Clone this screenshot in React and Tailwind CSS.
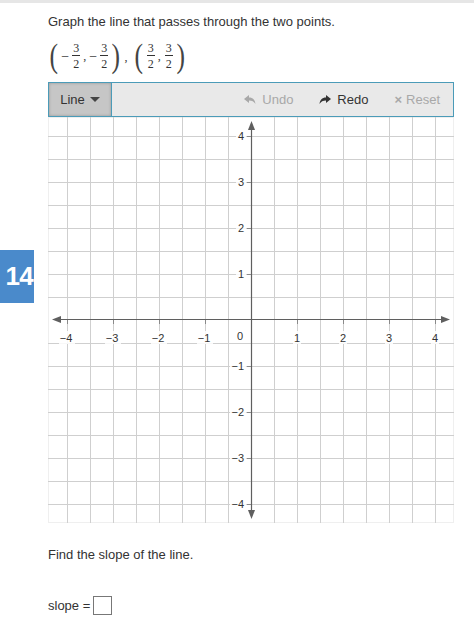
import { useMemo } from 'react'

function Frac({ n, d, neg }) {
  return (
    <span className="inline-flex items-center">
      {neg && <span className="mr-[3px] text-[14px]">−</span>}
      <span className="inline-flex flex-col items-center leading-none text-[12px]">
        <span className="px-[1px] pb-[1px] border-b border-[#333]">{n}</span>
        <span className="pt-[2px]">{d}</span>
      </span>
    </span>
  )
}

function Paren({ children }) {
  return (
    <span className="inline-flex items-center">
      <span className="text-[34px] leading-none font-light scale-x-75 text-[#444]">(</span>
      {children}
      <span className="text-[34px] leading-none font-light scale-x-75 text-[#444]">)</span>
    </span>
  )
}

function Graph() {
  const size = 406
  const c = 203
  const step = 23
  const lines = useMemo(() => {
    const out = []
    for (let k = -8; k <= 8; k++) {
      if (k === 0) continue
      out.push(c + k * step)
    }
    return out
  }, [])
  const units = [-4, -3, -2, -1, 1, 2, 3, 4]

  return (
    <svg width={size} height={size} className="block" style={{ fontFamily: 'Arial, "Liberation Sans", sans-serif' }}>
      <rect x="0.5" y="0.5" width={size - 1} height={size - 1} fill="#fff" stroke="#efefef" />
      {lines.map((p) => (
        <g key={p}>
          <line x1={p + 0.5} y1="0" x2={p + 0.5} y2={size} stroke="#cfcfcf" strokeWidth="1" />
          <line x1="0" y1={p + 0.5} x2={size} y2={p + 0.5} stroke="#cfcfcf" strokeWidth="1" />
        </g>
      ))}
      {/* axes */}
      <line x1="8" y1={c - 0.5} x2={size - 8} y2={c - 0.5} stroke="#5f5f5f" strokeWidth="1.2" />
      <line x1={c + 0.5} y1="8" x2={c + 0.5} y2={size - 8} stroke="#5f5f5f" strokeWidth="1.2" />
      <polygon points={`4,${c - 0.5} 13,${c - 4} 13,${c + 3}`} fill="#5f5f5f" />
      <polygon points={`${size - 4},${c - 0.5} ${size - 13},${c - 4} ${size - 13},${c + 3}`} fill="#5f5f5f" />
      <polygon points={`${c + 0.5},4 ${c - 3},13 ${c + 4},13`} fill="#5f5f5f" />
      <polygon points={`${c + 0.5},${size - 4} ${c - 3},${size - 13} ${c + 4},${size - 13}`} fill="#5f5f5f" />
      {units.map((u) => {
        const x = c + u * 46
        const y = c - u * 46
        return (
          <g key={u}>
            <line x1={x + 0.5} y1={c} x2={x + 0.5} y2={c + 4} stroke="#8a8a8a" />
            <line x1={c - 4} y1={y + 0.5} x2={c} y2={y + 0.5} stroke="#8a8a8a" />
            <rect x={x - (u < 0 ? 8 : 4)} y={c + 11} width={u < 0 ? 16 : 8} height={13} fill="#fff" opacity="0.85" />
            <text x={x + (u < 0 ? -1 : 0)} y={c + 22} fontSize="11" fill="#333" textAnchor="middle">
              {u < 0 ? `−${-u}` : u}
            </text>
            <rect x={c - (u < 0 ? 21 : 15)} y={y - 6} width={u < 0 ? 16 : 10} height={13} fill="#fff" opacity="0.85" />
            <text x={c - 7} y={y + 4} fontSize="11" fill="#333" textAnchor="end">
              {u < 0 ? `−${-u}` : u}
            </text>
          </g>
        )
      })}
      <text x={c - 11} y={c + 20} fontSize="11" fill="#333" textAnchor="middle">0</text>
    </svg>
  )
}

export default function App() {
  return (
    <div className="relative w-[474px] h-[620px] bg-white text-[#333] overflow-hidden" style={{ fontFamily: '"Liberation Sans", Arial, sans-serif' }}>
      <div className="h-[3px] bg-[#e6e6e6]" />

      {/* Question number */}
      <div className="absolute left-0 top-[250px] w-[34px] h-[53px] bg-[#4a8acb] flex items-center justify-end pr-[1px]">
        <span className="text-white text-[26px] font-bold tracking-tight">14</span>
      </div>

      <div className="pl-[48px] pr-[20px]">
        <p className="mt-[11px] text-[13px] leading-[16px]">Graph the line that passes through the two points.</p>

        <div className="mt-[9px] flex items-center h-[34px] text-[#333]" style={{ fontFamily: '"Liberation Serif", "DejaVu Serif", serif' }}>
          <Paren>
            <span className="inline-flex items-center px-[2px]">
              <Frac n="3" d="2" neg />
              <span className="text-[12px] mx-[3px] self-end mb-[5px]">,</span>
              <Frac n="3" d="2" neg />
            </span>
          </Paren>
          <span className="text-[12px] ml-[3px] mr-[6px] self-end mb-[7px]">,</span>
          <Paren>
            <span className="inline-flex items-center px-[2px]">
              <Frac n="3" d="2" />
              <span className="text-[12px] ml-[3px] mr-[4px] self-end mb-[5px]">,</span>
              <Frac n="3" d="2" />
            </span>
          </Paren>
        </div>

        {/* Toolbar */}
        <div className="mt-[9px] w-[406px] h-[35px] border border-[#4b9bb8] bg-[#e9e9e9] flex items-stretch">
          <button className="w-[63px] bg-[#c6c6c6] border-r border-[#4b9bb8] flex items-center justify-center gap-[5px] text-[13px] text-[#333] shadow-[inset_0_0_3px_rgba(0,0,0,0.25)]">
            Line
            <span className="w-0 h-0 border-l-[5px] border-r-[5px] border-t-[5px] border-l-transparent border-r-transparent border-t-[#444]" />
          </button>
          <div className="flex-1" />
          <div className="flex items-center text-[13px]">
            <span className="flex items-center gap-[6px] text-[#a8a8a8]">
              <svg width="12" height="10" viewBox="0 0 12 10"><path d="M0 4 L5 0 L5 2.5 C9 2.5 11 5 11.5 9 C10 6.5 8 5.5 5 5.5 L5 8 Z" fill="#a8a8a8" /></svg>
              Undo
            </span>
            <span className="ml-[26px] flex items-center gap-[6px] text-[#333]">
              <svg width="12" height="10" viewBox="0 0 12 10"><path d="M12 4 L7 0 L7 2.5 C3 2.5 1 5 0.5 9 C2 6.5 4 5.5 7 5.5 L7 8 Z" fill="#333" /></svg>
              Redo
            </span>
            <span className="ml-[26px] mr-[13px] flex items-center gap-[4px] text-[#a8a8a8]">
              <span className="text-[13px] font-bold">×</span>
              Reset
            </span>
          </div>
        </div>

        <Graph />

        <p className="mt-[24px] text-[13px] leading-[16px]">Find the slope of the line.</p>

        <div className="mt-[33px] flex items-center text-[13px]">
          <span>slope =</span>
          <span className="ml-[3px] w-[19px] h-[19px] border border-[#777] bg-white" />
        </div>
      </div>
    </div>
  )
}
